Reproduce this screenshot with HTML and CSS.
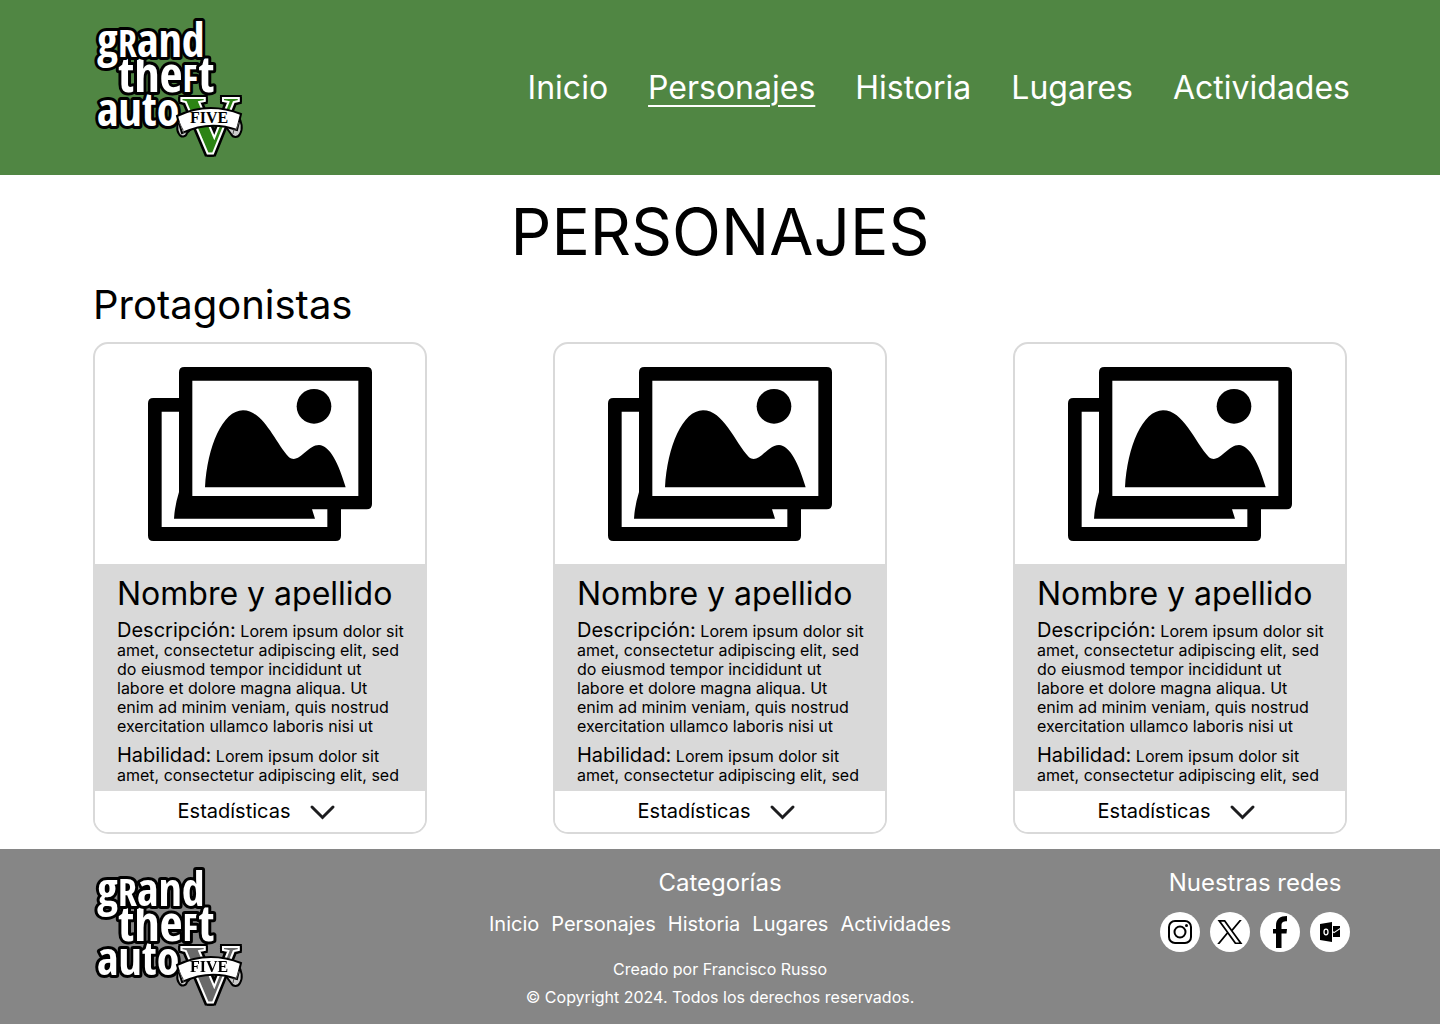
FILE: index.html
```html
<!DOCTYPE html>
<html lang="es">
<head>
<meta charset="utf-8">
<meta name="viewport" content="width=device-width, initial-scale=1">
<title>Personajes</title>
<link rel="stylesheet" href="styles.css">
</head>
<body>
<svg class="defs" width="0" height="0" aria-hidden="true">
  <symbol id="logo" viewBox="90 18 160 140">
    <g class="logo-letters">
      <text x="97" y="126">auto</text>
      <text class="logo-wide" x="118" y="92">the<tspan class="logo-cap">F</tspan>t</text>
      <text x="97" y="57">g<tspan class="logo-cap">R</tspan>and</text>
    </g>
    <text class="logo-v" x="210" y="152" text-anchor="middle">V</text>
    <path class="ribbon-end" d="M181 118c-4 4-5 12-2 16 2 4 7 3 8-1l5-5zM238 117c4 4 5 12 2 17-2 4-7 4-9 0l-5-7z"/>
    <path class="ribbon" d="M177 116q31-15 64-2l-4 16q-27-10-55 3z"/>
    <path class="ribbon-fold" d="M179 122l4 8M239 122l-3 8M182 128l2 5M234 129l-1 5"/>
    <text class="logo-five" x="209" y="123" text-anchor="middle">FIVE</text>
  </symbol>
  <symbol id="pictures" viewBox="174 81 672 522">
    <path fill-rule="evenodd" d="M190 174h77V97q0-16 16-16h547q16 0 16 16v395q0 16-16 16h-77v79q0 16-16 16H190q-16 0-16-16V190q0-16 16-16zM215 215v346h497V508h-46l9 28H252q2-38 15-80V215zM307 122v346h498V122z"/>
    <path d="M345 442C352 320 398 211 459 211c61 0 94 93 138 141 30 22 54-37 90-37 32 0 60 58 80 127z"/>
    <circle cx="672" cy="199" r="52"/>
  </symbol>
  <symbol id="chevron" viewBox="0 0 40 32">
    <path d="M10 11l10.500 10.500L31 11" fill="none" stroke="#1d1d1f" stroke-width="3" stroke-linecap="round"/>
  </symbol>
</svg>

<header class="site-header">
  <a class="logo" href="#" aria-label="Grand Theft Auto V"><svg width="160" height="140"><use href="#logo"/></svg></a>
  <nav class="main-nav">
    <a href="#">Inicio</a>
    <a class="current" href="#" aria-current="page">Personajes</a>
    <a href="#">Historia</a>
    <a href="#">Lugares</a>
    <a href="#">Actividades</a>
  </nav>
</header>

<main class="content">
  <h1>PERSONAJES</h1>
  <h2>Protagonistas</h2>
  <div class="cards">
    <article class="card">
      <div class="card-image"><svg width="224" height="174"><use href="#pictures"/></svg></div>
      <div class="card-body">
        <h3>Nombre y apellido</h3>
        <p><span class="label">Descripción:</span> Lorem ipsum dolor sit amet, consectetur adipiscing elit, sed do eiusmod tempor incididunt ut labore et dolore magna aliqua. Ut enim ad minim veniam, quis nostrud exercitation ullamco laboris nisi ut</p>
        <p><span class="label">Habilidad:</span> Lorem ipsum dolor sit amet, consectetur adipiscing elit, sed</p>
      </div>
      <button class="stats" type="button">Estadísticas <svg width="40" height="32"><use href="#chevron"/></svg></button>
    </article>
    <article class="card">
      <div class="card-image"><svg width="224" height="174"><use href="#pictures"/></svg></div>
      <div class="card-body">
        <h3>Nombre y apellido</h3>
        <p><span class="label">Descripción:</span> Lorem ipsum dolor sit amet, consectetur adipiscing elit, sed do eiusmod tempor incididunt ut labore et dolore magna aliqua. Ut enim ad minim veniam, quis nostrud exercitation ullamco laboris nisi ut</p>
        <p><span class="label">Habilidad:</span> Lorem ipsum dolor sit amet, consectetur adipiscing elit, sed</p>
      </div>
      <button class="stats" type="button">Estadísticas <svg width="40" height="32"><use href="#chevron"/></svg></button>
    </article>
    <article class="card">
      <div class="card-image"><svg width="224" height="174"><use href="#pictures"/></svg></div>
      <div class="card-body">
        <h3>Nombre y apellido</h3>
        <p><span class="label">Descripción:</span> Lorem ipsum dolor sit amet, consectetur adipiscing elit, sed do eiusmod tempor incididunt ut labore et dolore magna aliqua. Ut enim ad minim veniam, quis nostrud exercitation ullamco laboris nisi ut</p>
        <p><span class="label">Habilidad:</span> Lorem ipsum dolor sit amet, consectetur adipiscing elit, sed</p>
      </div>
      <button class="stats" type="button">Estadísticas <svg width="40" height="32"><use href="#chevron"/></svg></button>
    </article>
  </div>
</main>

<footer class="site-footer">
  <a class="logo logo-gray" href="#" aria-label="Grand Theft Auto V"><svg width="160" height="140"><use href="#logo"/></svg></a>
  <div class="footer-center">
    <h4>Categorías</h4>
    <nav class="footer-nav">
      <a href="#">Inicio</a>
      <a href="#">Personajes</a>
      <a href="#">Historia</a>
      <a href="#">Lugares</a>
      <a href="#">Actividades</a>
    </nav>
    <p>Creado por Francisco Russo</p>
    <p>© Copyright 2024. Todos los derechos reservados.</p>
  </div>
  <div class="networks">
    <h4>Nuestras redes</h4>
    <div class="network-links">
      <a href="#" aria-label="Instagram"><svg width="40" height="40" viewBox="0 0 40 40"><g fill="none" stroke="#000" stroke-width="2"><rect x="9" y="9" width="22" height="22" rx="6"/><circle cx="20" cy="20" r="5.500"/></g><circle cx="26.500" cy="13.500" r="1.500"/></svg></a>
      <a href="#" aria-label="X"><svg width="40" height="40" viewBox="0 0 40 40"><path fill-rule="evenodd" d="M7.500 8h7.600l6.700 9.300L29.500 8h2.300l-9 10.800L32.500 32h-7.600l-7.200-10L9.500 32H7.200l9.500-11.400zM11 9.700L26 30.400h3.200L14.200 9.700z"/></svg></a>
      <a href="#" aria-label="Facebook"><svg width="40" height="40" viewBox="0 0 40 40"><path d="M16 36V21.500h-3V17h3v-3.500C16 7 20 4 27 4v5.200c-4 0-5.500 1.200-5.500 4.300V17H27l-.5 4.500h-5V36z"/></svg></a>
      <a href="#" aria-label="Outlook"><svg width="40" height="40" viewBox="0 0 40 40"><path d="M10 12l12-2v20l-12-2zM23 14h7v2l-6 4-1-1zM23 20.500l1 .7 6-4V25h-7z"/><ellipse cx="16" cy="20" rx="2" ry="2.800" fill="none" stroke="#fff" stroke-width="1.300"/></svg></a>
    </div>
  </div>
</footer>
</body>
</html>
```
FILE: styles.css
```css
* {
  box-sizing: border-box;
  margin: 0;
}

body {
  font-family: Inter, sans-serif;
  font-size: 16px;
  line-height: 19px;
  color: #000;
  background: #fff;
}

h1, h2, h3, h4 {
  font-weight: 400;
}

a {
  color: inherit;
  text-decoration: none;
}

svg {
  display: block;
}

.defs {
  position: absolute;
}

.site-header {
  display: flex;
  align-items: center;
  justify-content: space-between;
  min-height: 175px;
  padding: 0 90px;
  background: #508643;
  color: #fff;
}

.main-nav {
  display: flex;
  gap: 40px;
  font-size: 32px;
  line-height: 39px;
}

.main-nav .current {
  text-decoration: underline;
  text-decoration-thickness: 2px;
  text-underline-offset: 6px;
}

/* Logo */
.logo-letters {
  font-family: "Open Sans Condensed", "Roboto Condensed", "Noto Sans Condensed", "DejaVu Sans Condensed", sans-serif;
  font-size: 46px;
  font-weight: 800;
  fill: #fff;
  stroke: #000;
  stroke-width: 6px;
  stroke-linejoin: round;
  paint-order: stroke;
}

.logo-wide {
  font-size: 50px;
}

.logo-cap {
  font-size: 38px;
}

.logo-v {
  font-family: "Liberation Serif", serif;
  font-size: 82px;
  font-weight: 700;
  fill: #2c8414;
  stroke: #fff;
  stroke-width: 2px;
  filter: drop-shadow(2px 0 0 #000) drop-shadow(-2px 0 0 #000) drop-shadow(0 2px 0 #000) drop-shadow(0 -2px 0 #000);
}

.ribbon,
.ribbon-end {
  fill: #fff;
  stroke: #000;
  stroke-width: 2px;
}

.ribbon-end {
  fill: #ccc;
}

.ribbon-fold {
  fill: none;
  stroke: #555;
  stroke-width: 1px;
}

.logo-five {
  font-family: "Liberation Serif", serif;
  font-size: 16px;
  font-weight: 700;
}

.logo-gray {
  filter: grayscale(1);
}

/* Content */
.content {
  padding: 18px 93px 15px;
}

h1 {
  font-size: 64px;
  line-height: 77px;
  text-align: center;
}

h2 {
  margin: 11px 0 13px;
  font-size: 40px;
  line-height: 48px;
}

.cards {
  display: flex;
  flex-wrap: wrap;
  justify-content: space-between;
  gap: 24px;
}

.card {
  width: 334px;
  overflow: hidden;
  border: 2px solid #d9d9d9;
  border-radius: 15px;
}

.card-image {
  display: flex;
  justify-content: center;
  padding: 23px 0;
}

.card-body {
  display: flex;
  flex-direction: column;
  gap: 10px;
  padding: 12px 18px 6px 22px;
  background: #d9d9d9;
}

h3 {
  font-size: 32px;
  line-height: 35px;
}

.label {
  font-size: 20px;
}

.stats {
  display: flex;
  align-items: center;
  justify-content: center;
  gap: 12px;
  width: 100%;
  height: 41px;
  padding: 0;
  border: 0;
  background: #fff;
  font: inherit;
  font-size: 20px;
  color: #000;
}

/* Footer */
.site-footer {
  display: grid;
  grid-template-columns: 1fr auto 1fr;
  align-items: start;
  min-height: 175px;
  padding: 18px 90px 17px;
  background: #868686;
  color: #fff;
}

h4 {
  font-size: 24px;
  line-height: 32px;
}

.footer-center {
  display: flex;
  flex-direction: column;
  align-items: center;
  gap: 9px;
}

.footer-nav {
  display: flex;
  gap: 12px;
  margin: 4px 0 15px;
  font-size: 20px;
  line-height: 24px;
}

.networks {
  display: flex;
  flex-direction: column;
  align-items: center;
  justify-self: end;
  gap: 13px;
}

.network-links {
  display: flex;
  gap: 10px;
}

.network-links a {
  border-radius: 50%;
  background: #fff;
}
```
